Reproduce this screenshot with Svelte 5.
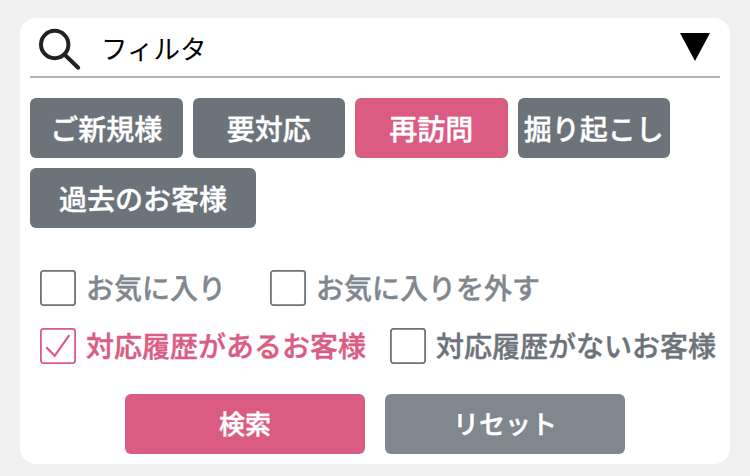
<script lang="ts">
	let open = $state(true);

	let tags = $state([
		{ label: 'ご新規様', active: false },
		{ label: '要対応', active: false },
		{ label: '再訪問', active: true },
		{ label: '掘り起こし', active: false },
		{ label: '過去のお客様', active: false, wide: true }
	]);

	let favorites = $state([
		{ label: 'お気に入り', checked: false },
		{ label: 'お気に入りを外す', checked: false }
	]);

	let histories = $state([
		{ label: '対応履歴があるお客様', checked: true },
		{ label: '対応履歴がないお客様', checked: false }
	]);

	function reset() {
		for (const tag of tags) tag.active = false;
		for (const item of [...favorites, ...histories]) item.checked = false;
	}
</script>

{#snippet check(item)}
	<button
		class="check"
		class:checked={item.checked}
		role="checkbox"
		aria-checked={item.checked}
		onclick={() => (item.checked = !item.checked)}
	>
		<svg class="box" viewBox="0 0 36 36" aria-hidden="true">
			<rect x="0.9" y="0.9" width="34.2" height="34.2" rx="2.5" />
			{#if item.checked}
				<path class="mark" d="M6.3 19.3 14.7 27.8 29.3 7.2" />
			{/if}
		</svg>
		<span class="label">{item.label}</span>
	</button>
{/snippet}

<div class="filter">
	<button class="header" onclick={() => (open = !open)}>
		<svg class="search" viewBox="0 0 44 44" aria-hidden="true">
			<circle cx="16.7" cy="17.5" r="13.7" />
			<path d="M26.8 27.8 40.2 40.7" />
		</svg>
		<span class="title">フィルタ</span>
		<svg class="arrow" viewBox="0 0 30 28" aria-hidden="true">
			<path d="M0 0H30L15 28Z" />
		</svg>
	</button>

	{#if open}
		<div class="tags">
			{#each tags as tag}
				<button
					class="tag"
					class:active={tag.active}
					class:wide={tag.wide}
					onclick={() => (tag.active = !tag.active)}
				>
					{tag.label}
				</button>
			{/each}
		</div>

		<div class="checks favorites">
			{#each favorites as item}
				{@render check(item)}
			{/each}
		</div>
		<div class="checks histories">
			{#each histories as item}
				{@render check(item)}
			{/each}
		</div>

		<div class="actions">
			<button class="action submit">検索</button>
			<button class="action" onclick={reset}>リセット</button>
		</div>
	{/if}
</div>

<style>
	:global(body) {
		background: #f0f0f0;
	}

	.filter {
		box-sizing: border-box;
		width: 710px;
		height: 446px;
		margin: 18px 20px 0;
		padding: 0 10px;
		border-radius: 16px;
		background: #fff;
		overflow: hidden;
		font-family: 'Noto Sans CJK JP', sans-serif;
	}

	button {
		box-sizing: border-box;
		margin: 0;
		padding: 0;
		border: 0;
		background: none;
		font: inherit;
		font-weight: 500;
		white-space: nowrap;
		cursor: pointer;
	}

	.header {
		display: flex;
		align-items: center;
		width: 100%;
		height: 60px;
		padding: 0 10px 0 8px;
		border-bottom: 2px solid #b3b3b3;
		color: #000;
	}

	.search {
		width: 44px;
		height: 44px;
		margin-top: 4px;
		fill: none;
		stroke: #222;
		stroke-width: 4;
		stroke-linecap: round;
	}

	.title {
		flex: 1;
		margin-left: 19px;
		font-size: 26.5px;
		font-weight: 400;
		text-align: left;
	}

	.arrow {
		width: 30px;
		height: 28px;
	}

	.tags {
		display: flex;
		flex-wrap: wrap;
		gap: 10px;
		margin-top: 20px;
	}

	.tag {
		width: 152.5px;
		height: 60px;
		padding-bottom: 1px;
		border-radius: 6px;
		background: #6c737b;
		color: #fff;
		font-size: 28px;
		-webkit-text-stroke: 0.35px;
	}

	.tag.wide {
		width: 226px;
	}

	.tag.active {
		background: #da5c83;
	}

	.checks {
		display: flex;
		padding-left: 10px;
	}

	.favorites {
		gap: 44px;
		margin-top: 42px;
		color: #80878e;
	}

	.histories {
		gap: 24px;
		margin-top: 22px;
		color: #6c737b;
	}

	.check {
		display: flex;
		align-items: center;
		gap: 10px;
		height: 36px;
		color: inherit;
		font-size: 28px;
		-webkit-text-stroke: 0.4px;
	}

	.label {
		padding-bottom: 2px;
	}

	.box {
		flex: none;
		width: 36px;
		height: 36px;
		fill: none;
		stroke: #6c737b;
		stroke-width: 1.8;
	}

	.mark {
		stroke-width: 2.2;
	}

	.check.checked {
		color: #da5c83;
	}

	.checked .box {
		stroke: #da5c83;
	}

	.actions {
		display: flex;
		justify-content: center;
		gap: 20px;
		margin-top: 30px;
	}

	.action {
		width: 240px;
		height: 60px;
		padding-bottom: 3px;
		border-radius: 6px;
		background: #80878e;
		color: #fff;
		font-size: 26px;
		-webkit-text-stroke: 0.4px;
	}

	.action.submit {
		background: #da5c83;
	}
</style>
